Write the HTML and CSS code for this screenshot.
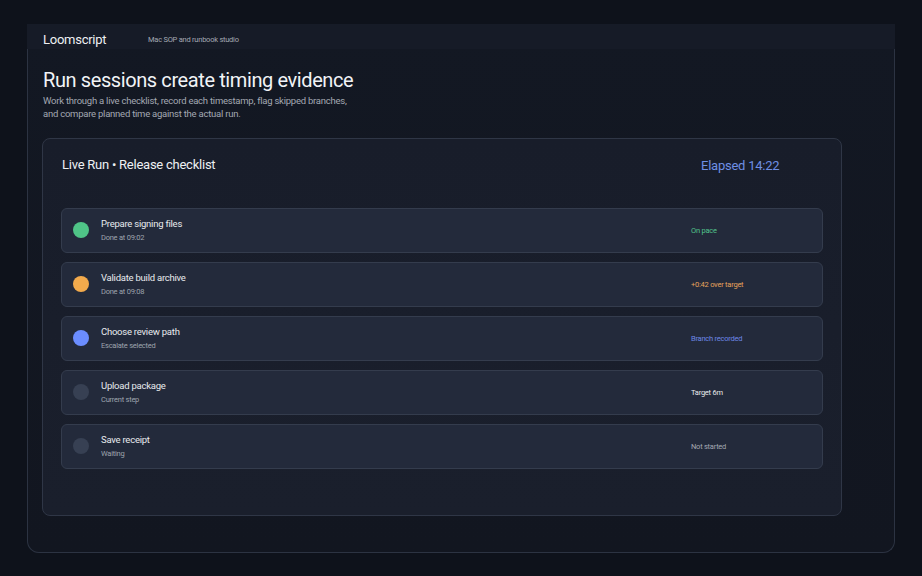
FILE: index.html
```html
<!DOCTYPE html>
<html lang="en">
<head>
    <meta charset="UTF-8">
    <meta name="viewport" content="width=device-width, initial-scale=1.0">
    <title>Loomscript - Run sessions</title>
    <link rel="stylesheet" href="styles.css">
</head>
<body>
    <div class="app-frame">
        <header class="top-bar">
            <span class="brand">Loomscript</span>
            <span class="tagline">Mac SOP and runbook studio</span>
        </header>

        <main class="content">
            <h1>Run sessions create timing evidence</h1>
            <p class="intro">Work through a live checklist, record each timestamp, flag skipped branches,<br>and compare planned time against the actual run.</p>

            <section class="run-card">
                <div class="run-header">
                    <h2>Live Run • Release checklist</h2>
                    <span class="elapsed">Elapsed 14:22</span>
                </div>

                <ul class="step-list">
                    <li class="step">
                        <span class="dot dot-done"></span>
                        <div class="step-text">
                            <div class="step-title">Prepare signing files</div>
                            <div class="step-sub">Done at 09:02</div>
                        </div>
                        <span class="step-status status-good">On pace</span>
                    </li>
                    <li class="step">
                        <span class="dot dot-late"></span>
                        <div class="step-text">
                            <div class="step-title">Validate build archive</div>
                            <div class="step-sub">Done at 09:08</div>
                        </div>
                        <span class="step-status status-late">+0:42 over target</span>
                    </li>
                    <li class="step">
                        <span class="dot dot-branch"></span>
                        <div class="step-text">
                            <div class="step-title">Choose review path</div>
                            <div class="step-sub">Escalate selected</div>
                        </div>
                        <span class="step-status status-branch">Branch recorded</span>
                    </li>
                    <li class="step">
                        <span class="dot dot-idle"></span>
                        <div class="step-text">
                            <div class="step-title">Upload package</div>
                            <div class="step-sub">Current step</div>
                        </div>
                        <span class="step-status status-current">Target 6m</span>
                    </li>
                    <li class="step">
                        <span class="dot dot-idle"></span>
                        <div class="step-text">
                            <div class="step-title">Save receipt</div>
                            <div class="step-sub">Waiting</div>
                        </div>
                        <span class="step-status status-idle">Not started</span>
                    </li>
                </ul>
            </section>
        </main>
    </div>
</body>
</html>
```

FILE: styles.css
```css
* {
    box-sizing: border-box;
}

body {
    font-family: Roboto, "Noto Sans", sans-serif;
    letter-spacing: -0.015em;
    background-color: #0e121b;
    color: #e6e8ec;
    margin: 0;
    padding: 24px 27px;
}

.app-frame {
    background: linear-gradient(180deg, #131823 0%, #121620 100%);
    border: 1px solid #2c3342;
    border-top: none;
    border-radius: 0 0 12px 12px;
}

.top-bar {
    display: flex;
    align-items: center;
    height: 25px;
    margin: 0 -1px;
    padding: 6px 16px 0;
    background-color: #161b27;
}

.brand {
    font-size: 13px;
    letter-spacing: -0.02em;
    color: #eef0f3;
    width: 105px;
}

.tagline {
    font-size: 7.5px;
    color: #a4a9b3;
}

.content {
    padding: 18px 15px 36px;
}

h1 {
    margin: 0;
    font-size: 20px;
    line-height: 26px;
    font-weight: 400;
    letter-spacing: -0.02em;
    color: #f1f3f6;
}

.intro {
    margin: 1px 0 18px;
    font-size: 9.5px;
    line-height: 13px;
    color: #a3a8b2;
}

.run-card {
    width: 800px;
    margin-left: -1px;
    background: linear-gradient(180deg, #181d2a 0%, #1a1f2c 100%);
    border: 1px solid #2f3646;
    border-radius: 8px;
    padding: 17px 18px 46px 19px;
}

.run-header {
    display: grid;
    grid-template-columns: 1fr 122px;
    align-items: center;
    margin-bottom: 34px;
}

.run-header h2 {
    margin: 0;
    font-size: 13px;
    line-height: 18px;
    font-weight: 400;
    color: #eef0f3;
}

.elapsed {
    font-size: 13px;
    color: #6f8fe4;
}

.step-list {
    list-style: none;
    margin: 0 0 0 -1px;
    padding: 0;
    display: flex;
    flex-direction: column;
    gap: 9px;
}

.step {
    display: grid;
    grid-template-columns: 16px 1fr 119px;
    align-items: center;
    column-gap: 12px;
    height: 45px;
    padding: 0 12px 0 11px;
    background-color: #232a3b;
    border: 1px solid #343c4d;
    border-radius: 6px;
}

.dot {
    width: 16px;
    height: 16px;
    border-radius: 50%;
    margin-top: -2px;
}

.dot-done { background-color: #4fc487; }
.dot-late { background-color: #f2aa4c; }
.dot-branch { background-color: #6b8dff; }
.dot-idle { background-color: #374053; }

.step-title {
    font-size: 9.5px;
    line-height: 14px;
    color: #e8eaee;
}

.step-sub {
    margin-top: 1px;
    font-size: 7.5px;
    line-height: 12px;
    color: #9ea4ae;
}

.step-status {
    font-size: 7.5px;
}

.status-good { color: #52c28b; }
.status-late { color: #e6a35c; }
.status-branch { color: #6d88e6; }
.status-current { color: #e8eaee; }
.status-idle { color: #a3a8b2; }
```
